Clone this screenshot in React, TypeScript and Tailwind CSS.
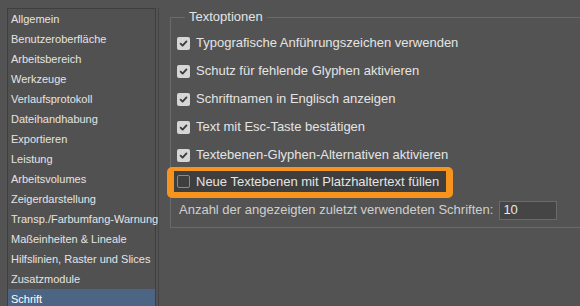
import React from 'react';

const sections = [
  'Allgemein',
  'Benutzeroberfläche',
  'Arbeitsbereich',
  'Werkzeuge',
  'Verlaufsprotokoll',
  'Dateihandhabung',
  'Exportieren',
  'Leistung',
  'Arbeitsvolumes',
  'Zeigerdarstellung',
  'Transp./Farbumfang-Warnung',
  'Maßeinheiten & Lineale',
  'Hilfslinien, Raster und Slices',
  'Zusatzmodule',
  'Schrift',
];

const options = [
  'Typografische Anführungszeichen verwenden',
  'Schutz für fehlende Glyphen aktivieren',
  'Schriftnamen in Englisch anzeigen',
  'Text mit Esc-Taste bestätigen',
  'Textebenen-Glyphen-Alternativen aktivieren',
];

function Checkbox({ checked }: { checked: boolean }) {
  if (!checked) {
    return <span className="w-[13px] h-[13px] shrink-0 rounded-[2px] border border-[#8a8a8a] bg-[#3f3f3f]" />;
  }
  return (
    <span className="w-[13px] h-[13px] shrink-0 rounded-[2px] bg-[#d6d6d6] flex items-center justify-center">
      <svg width="9" height="9" viewBox="0 0 10 10" fill="none">
        <path d="M1.8 5.2 L4 7.4 L8.3 2.6" stroke="#3a3a3a" strokeWidth="2" strokeLinecap="round" strokeLinejoin="round" />
      </svg>
    </span>
  );
}

export default function App() {
  return (
    <div className="w-[580px] h-[306px] overflow-hidden bg-[#535353] flex text-[#e4e4e4]" style={{ fontFamily: '"Liberation Sans", Arial, sans-serif' }}>
      {/* SIDEBAR */}
      <div className="ml-[7px] mt-[8px] w-[149px] shrink-0 border-l border-t border-r border-[#3f3f3f] bg-[#515151] flex flex-col text-[11px]">
        {sections.map(s => (
          <div
            key={s}
            className={`h-[20px] shrink-0 flex items-center pl-[3px] whitespace-nowrap ${s === 'Schrift' ? 'bg-[#4c6585] text-white' : ''}`}
          >
            {s}
          </div>
        ))}
      </div>
      <div className="w-[1px] mt-[8px] bg-[#444] ml-[2px]" />

      {/* CONTENT */}
      <div className="flex-1 pl-[11px] pt-[17px]">
        <div className="relative h-[211px] border-l border-t border-b border-[#6a6a6a] pt-[11px]">
          <span className="absolute -top-[9px] left-[14px] px-[4px] bg-[#535353] text-[13px] leading-[16px]">Textoptionen</span>
          <div className="flex flex-col text-[13px]">
            {options.map(o => (
              <div key={o} className="h-[28px] flex items-center gap-[6px] pl-[6px] whitespace-nowrap">
                <Checkbox checked />
                <span>{o}</span>
              </div>
            ))}
            <div className="ml-[-4px] w-[286px] mt-[-2px] rounded-[5px] bg-[#f7941d] pt-[4px] pb-[6px] px-[7px]">
              <div className="h-[21px] bg-[#3e3e3e] flex items-center gap-[6px] pl-[3px] whitespace-nowrap">
                <Checkbox checked={false} />
                <span>Neue Textebenen mit Platzhaltertext füllen</span>
              </div>
            </div>
            <div className="h-[24px] flex items-center pl-[8px] gap-[6px] whitespace-nowrap text-[#cfcfcf]">
              <span>Anzahl der angezeigten zuletzt verwendeten Schriften:</span>
              <span className="w-[58px] h-[19px] bg-[#454545] border border-[#6a6a6a] flex items-center pl-[3px] text-[#e8e8e8]">10</span>
            </div>
          </div>
        </div>
      </div>
    </div>
  );
}
